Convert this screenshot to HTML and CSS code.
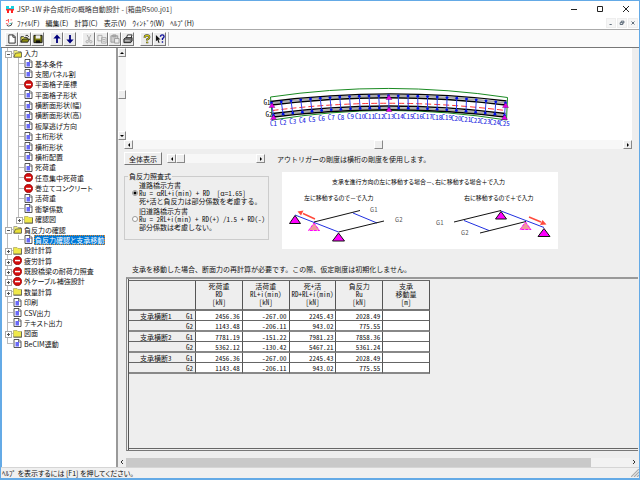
FILE: index.html
```html
<!DOCTYPE html>
<html>
<head>
<meta charset="utf-8">
<title>JSP-1W 非合成桁の概略自動設計</title>
<link rel="stylesheet" href="styles.css">
</head>
<body>
<svg width="0" height="0" class="defs" aria-hidden="true">
  <symbol id="doc" viewBox="0 0 8 9"><path d="M.5.5h5l2 2v6h-7z" fill="#fff" stroke="#444" stroke-width=".9"/><path d="M5 .5v2.500h2.500" fill="none" stroke="#444" stroke-width=".7"/><path d="M2 3h3.500v4.500H2z" fill="#6a6af8"/></symbol>
  <symbol id="stop" viewBox="0 0 9 9"><circle cx="4.500" cy="4.500" r="4.200" fill="#d40c0c" stroke="#700" stroke-width=".6"/><path d="M2 3.800h5v1.500H2z" fill="#fff"/></symbol>
  <symbol id="folder" viewBox="0 0 9 9"><path d="M.5 1.500h3.500l1 1h3.500v5.500h-8z" fill="#efe84a" stroke="#a8a464" stroke-width=".7"/><path d="M.5 8.200h8.200V2.700" fill="none" stroke="#444" stroke-width=".8"/></symbol>
  <symbol id="folder-open" viewBox="0 0 9 9"><path d="M.8 8V1.500h3.200l1 1h3V8z" fill="#f4f07a" stroke="#888" stroke-width=".7"/><path d="M2.500 4.200L8.500 3.500V8.200H.8z" fill="#e8e038" stroke="#444" stroke-width=".7"/></symbol>
  <symbol id="tri-l" viewBox="0 0 6 6"><path d="M4 1v4L2 3z"/></symbol>
  <symbol id="tri-r" viewBox="0 0 6 6"><path d="M2 1v4l2-2z"/></symbol>
  <symbol id="tri-u" viewBox="0 0 6 6"><path d="M1 4h4L3 2z"/></symbol>
  <symbol id="tri-d" viewBox="0 0 6 6"><path d="M1 2h4L3 4z"/></symbol>
</svg>
<div class="window">
  <header class="titlebar">
    <svg class="app-icon" viewBox="0 0 8 8"><path d="M0 1h3v2h2V1h3v3H0z" fill="#18d0dc"/><path d="M0 4h8v1.500H0z" fill="#e33"/><path d="M1 5h2v3H1zM5 5h2v3H5z" fill="#f22"/></svg>
    <h1 class="title">JSP-1W 非合成桁の概略自動設計 - [箱曲R500.j01]</h1>
    <div class="window-controls">
      <button aria-label="最小化"><svg viewBox="0 0 8 8"><path d="M1 4.500h6"/></svg></button>
      <button aria-label="最大化"><svg viewBox="0 0 8 8"><path d="M1.500 1.500h5v5h-5z"/></svg></button>
      <button aria-label="閉じる"><svg viewBox="0 0 8 8"><path d="M1 1l6 6M7 1L1 7"/></svg></button>
    </div>
  </header>
  <nav class="menubar">
    <svg class="app-icon" viewBox="0 0 9 9"><path d="M1 2l3-1M4 0v4M1 5l3 1M6 1h2" stroke="#f44" fill="none"/><path d="M2 7l2 1 3-1 1-3" stroke="#333" fill="none"/><path d="M5 5h2" stroke="#2cc"/></svg>
    <button>ﾌｧｲﾙ(F)</button><button>編集(E)</button><button>計算(C)</button><button>表示(V)</button><button>ｳｨﾝﾄﾞｳ(W)</button><button>ﾍﾙﾌﾟ(H)</button>
    <div class="mdi-controls">
      <button aria-label="子ウィンドウを最小化"><svg viewBox="0 0 8 8"><path d="M2 6h3"/></svg></button>
      <button aria-label="元に戻す"><svg viewBox="0 0 8 8"><path d="M3 3V1.500h3.500V4H5M1.500 3.500H5V6H1.500z"/></svg></button>
      <button aria-label="子ウィンドウを閉じる"><svg viewBox="0 0 8 8"><path d="M2 2l4 4M6 2L2 6"/></svg></button>
    </div>
  </nav>
  <div class="toolbar">
    <div class="tool-group">
      <button aria-label="新規"><svg viewBox="0 0 11 11"><path d="M2 1h5l2 2v7H2z" fill="#fff" stroke="#222"/><path d="M6.500 1v2.500H9" fill="none" stroke="#222"/></svg></button>
      <button aria-label="開く"><svg viewBox="0 0 11 11"><path d="M1 9V3h3l1 1h3v2" fill="#f3f060" stroke="#222"/><path d="M1 9l2-3.500h7.500L8.500 9z" fill="#8a8a10" stroke="#222"/><path d="M6 2q2-2 3.500 1" fill="none" stroke="#222"/></svg></button>
      <button aria-label="保存"><svg viewBox="0 0 11 11"><path d="M1 1.500h9v8H1z" fill="#77770c" stroke="#111"/><path d="M3 1.500h5V5H3z" fill="#eee"/><path d="M3 7h5v3H3z" fill="#111"/></svg></button>
    </div>
    <div class="tool-group">
      <button aria-label="上へ"><svg viewBox="0 0 11 11"><path d="M5.500.5L9.500 5h-3v5h-2V5h-3z" fill="#00007c"/></svg></button>
      <button aria-label="下へ"><svg viewBox="0 0 11 11"><path d="M5.500 10.500L1.500 6h3V1h2v5h3z" fill="#00007c"/></svg></button>
    </div>
    <div class="tool-group">
      <button aria-label="切り取り"><svg viewBox="0 0 11 11" fill="none" stroke="#aaa"><path d="M3.500 1l3 6.500M7.500 1l-3 6.500"/><circle cx="3.500" cy="8.500" r="1.300"/><circle cx="7.500" cy="8.500" r="1.300"/></svg></button>
      <button aria-label="コピー"><svg viewBox="0 0 11 11" fill="#eee" stroke="#aaa"><path d="M1 1.500h4.500v6H1zM5 4h5v6H5zM6 6h3M6 8h3"/></svg></button>
      <button aria-label="貼り付け"><svg viewBox="0 0 11 11" fill="#ccc" stroke="#999"><path d="M1 2h7.500v7H1zM3 1h3.500v2H3z"/><path d="M5 5h5v5H5z" fill="#eee"/></svg></button>
      <button aria-label="印刷"><svg viewBox="0 0 11 11"><path d="M3.500 5L5 1h5L8.500 5" fill="#fff" stroke="#222"/><path d="M1 5.500L3 4h7v3.500L8.500 9.500H1z" fill="#777" stroke="#222"/><path d="M2 7.500h5.500" stroke="#ddd"/></svg></button>
    </div>
    <div class="tool-group">
      <button aria-label="バージョン情報"><svg viewBox="0 0 11 11"><path d="M3 4q0-2.500 2.500-2.500T8 3.500Q8 5 5.700 6v1.200M5.700 8.500v1.700" fill="none" stroke="#333" stroke-width="2.400"/><path d="M3 4q0-2.500 2.500-2.500T8 3.500Q8 5 5.700 6v1.200M5.700 8.500v1.500" fill="none" stroke="#cfc810" stroke-width="1.300"/></svg></button>
      <button aria-label="ヘルプ"><svg viewBox="0 0 11 11"><path d="M1 1v7l1.700-1.500L4 10l1-.5L3.800 6H6z" fill="#111"/><path d="M6 3q0-2 2-2t2 1.800Q10 4 8.200 5v1.500M8.200 8v1.500" fill="none" stroke="#10109a" stroke-width="1.500"/></svg></button>
    </div>
    <span class="tool-end"></span>
  </div>

  <main class="workspace">
    <aside class="sidebar">
      <ul class="tree">
        <li class="root open"><a href="#"><svg><use href="#folder-open"/></svg><span>入力</span></a></li>
        <li class="child"><a href="#"><svg><use href="#doc"/></svg><span>基本条件</span></a></li>
        <li class="child"><a href="#"><svg><use href="#doc"/></svg><span>支間パネル割</span></a></li>
        <li class="child"><a href="#"><svg><use href="#stop"/></svg><span>平面格子座標</span></a></li>
        <li class="child"><a href="#"><svg><use href="#doc"/></svg><span>平面格子形状</span></a></li>
        <li class="child"><a href="#"><svg><use href="#doc"/></svg><span>横断面形状(幅)</span></a></li>
        <li class="child"><a href="#"><svg><use href="#doc"/></svg><span>横断面形状(高)</span></a></li>
        <li class="child"><a href="#"><svg><use href="#doc"/></svg><span>板厚逃げ方向</span></a></li>
        <li class="child"><a href="#"><svg><use href="#doc"/></svg><span>主桁形状</span></a></li>
        <li class="child"><a href="#"><svg><use href="#doc"/></svg><span>横桁形状</span></a></li>
        <li class="child"><a href="#"><svg><use href="#doc"/></svg><span>横桁配置</span></a></li>
        <li class="child"><a href="#"><svg><use href="#doc"/></svg><span>死荷重</span></a></li>
        <li class="child"><a href="#"><svg><use href="#stop"/></svg><span>任意集中死荷重</span></a></li>
        <li class="child"><a href="#"><svg><use href="#stop"/></svg><span>巻立てコンクリート</span></a></li>
        <li class="child"><a href="#"><svg><use href="#doc"/></svg><span>活荷重</span></a></li>
        <li class="child"><a href="#"><svg><use href="#doc"/></svg><span>衝撃係数</span></a></li>
        <li class="child last closed"><a href="#"><svg><use href="#folder"/></svg><span>確認図</span></a></li>
        <li class="root open"><a href="#"><svg><use href="#folder-open"/></svg><span>負反力の確認</span></a></li>
        <li class="child last"><a href="#" class="selected"><svg><use href="#doc"/></svg><span>負反力確認と支承移動</span></a></li>
        <li class="root closed"><a href="#"><svg><use href="#folder"/></svg><span>設計計算</span></a></li>
        <li class="root closed"><a href="#"><svg><use href="#stop"/></svg><span>疲労計算</span></a></li>
        <li class="root closed"><a href="#"><svg><use href="#stop"/></svg><span>既設橋梁の耐荷力照査</span></a></li>
        <li class="root closed"><a href="#"><svg><use href="#stop"/></svg><span>外ケーブル補強設計</span></a></li>
        <li class="root closed"><a href="#"><svg><use href="#folder"/></svg><span>数量計算</span></a></li>
        <li class="root"><a href="#"><svg><use href="#doc"/></svg><span>印刷</span></a></li>
        <li class="root"><a href="#"><svg><use href="#doc"/></svg><span>CSV出力</span></a></li>
        <li class="root"><a href="#"><svg><use href="#doc"/></svg><span>テキスト出力</span></a></li>
        <li class="root closed"><a href="#"><svg><use href="#folder"/></svg><span>図面</span></a></li>
        <li class="root end"><a href="#"><svg><use href="#doc"/></svg><span>BeCIM連動</span></a></li>
      </ul>
    </aside>

    <section class="content">
      <div class="view">
        <div class="scroll vertical">
          <button aria-label="上"><svg><use href="#tri-u"/></svg></button><i></i><button aria-label="縦位置"></button><i></i><button aria-label="下"><svg><use href="#tri-d"/></svg></button>
        </div>
        <svg class="bridge" viewBox="126 48 505 92">
          <g fill="none">
            <path d="M270 97Q388 79.600 507 97.500L506 120Q388 101 272 120z" stroke="#1a8a22"/>
            <path d="M270 103.200Q388 88.500 506 103M272 115.300Q388 100.500 504 115.300" stroke="#aaa" stroke-width="2"/>
            <path d="M270 101.500Q388 86.500 506 101M271 105Q388 90.500 505 105M272 113.500Q388 98.500 505 113.500M273 117Q388 102.500 504 117" stroke="#000" stroke-width="1.300"/>
            <path d="M272 110.500Q388 96 505 110.500" stroke="#f33" stroke-dasharray="6 3"/>
          </g>
          <g id="frames"></g>
          <g fill="#e800e8" stroke="#700070" stroke-width=".4"><path d="M271.500 103l3 4.500h-6zM273 115l3 4.500h-6zM388.500 95l3 4.500h-6zM388.500 107l3 4.500h-6zM505 103l3 4.500h-6zM504 115l3 4.500h-6z"/></g>
          <text x="270" y="105">G1</text><text x="272" y="117">G2</text>
        </svg>
      </div>
      <div class="scroll wide">
        <button aria-label="左"><svg><use href="#tri-l"/></svg></button><i></i><button aria-label="横位置"></button><i></i><button aria-label="右"><svg><use href="#tri-r"/></svg></button>
      </div>

      <div class="actions">
        <button class="raised">全体表示</button>
        <div class="scroll small">
          <button aria-label="縮小"><svg><use href="#tri-l"/></svg></button><button aria-label="倍率"></button><i></i><button aria-label="拡大"><svg><use href="#tri-r"/></svg></button>
        </div>
        <p class="notice">アウトリガーの剛度は横桁の剛度を使用します。</p>
      </div>

      <div class="settings">
        <fieldset class="formula">
          <legend>負反力照査式</legend>
          <label><input type="radio" name="formula" checked><span>道路橋示方書<br>Ru = αRL+i(min) + RD&nbsp; [α=1.65]<br>死+活と負反力は部分係数を考慮する。</span></label>
          <label><input type="radio" name="formula"><span>旧道路橋示方書<br>Ru = 2RL+i(min) + RD(+) /1.5 + RD(-)<br>部分係数は考慮しない。</span></label>
        </fieldset>
        <svg class="guide" viewBox="282 172 276 77">
          <text x="332" y="184">支承を進行方向の左に移動する場合－、右に移動する場合＋で入力</text>
          <text x="304" y="200">左に移動するので－で入力</text>
          <text x="464" y="200">右に移動するので＋で入力</text>
          <g fill="none">
            <path d="M295 215l43.500 17M353 213l24 10M501 211l43 16.500M464 220.500l25 10" stroke="#2030e0"/>
            <path d="M314 222l46-11.500M338.500 232l45.500-11M454 222l47-11.500M480 233l46-11.500" stroke="#111"/>
            <path d="M315 219l-12-5.500M529 217l12 5" stroke="#ff4a3c" stroke-width="1.500"/>
          </g>
          <path d="M297.500 211.500l6-1-2.500 5zM546.500 224.500l-6.500.5 2.500-5z" fill="#ff4a3c"/>
          <g fill="#f0f" stroke="#111"><path d="M295 215.500l5.500 8h-11zM338.500 233l6 8h-12zM501 211.500l5.500 7.500h-11zM544 228.500l6 8h-12z"/></g>
          <g fill="#ef9a9a" stroke="#f0f" stroke-dasharray="3 1"><path d="M314 223l5.500 7.500h-11zM525.500 222l5.500 7.500h-11z"/></g>
          <g class="girder"><text x="370" y="212">G1</text><text x="395" y="222">G2</text><text x="436" y="225">G1</text><text x="461" y="235">G2</text></g>
        </svg>
      </div>

      <p class="remark">支承を移動した場合、断面力の再計算が必要です。この際、仮定剛度は初期化しません。</p>

      <div class="sheet">
        <table>
          <colgroup><col class="name"><col><col><col><col><col></colgroup>
          <thead><tr><th></th><th>死荷重<br>RD<br>[kN]</th><th>活荷重<br>RL+i(min)<br>[kN]</th><th>死＋活<br>RD+RL+i(min)<br>[kN]</th><th>負反力<br>Ru<br>[kN]</th><th>支承<br>移動量<br>[m]</th></tr></thead>
          <tbody>
            <tr><th><div><span>支承横断1</span><span>G1</span></div></th><td>2456.36</td><td>-267.00</td><td>2245.43</td><td>2028.49</td><td></td></tr>
            <tr><th><div><span></span><span>G2</span></div></th><td>1143.48</td><td>-206.11</td><td>943.02</td><td>775.55</td><td></td></tr>
            <tr><th><div><span>支承横断2</span><span>G1</span></div></th><td>7781.19</td><td>-151.22</td><td>7981.23</td><td>7858.36</td><td></td></tr>
            <tr><th><div><span></span><span>G2</span></div></th><td>5362.12</td><td>-130.42</td><td>5467.21</td><td>5361.24</td><td></td></tr>
            <tr><th><div><span>支承横断3</span><span>G1</span></div></th><td>2456.36</td><td>-267.00</td><td>2245.43</td><td>2028.49</td><td></td></tr>
            <tr><th><div><span></span><span>G2</span></div></th><td>1143.48</td><td>-206.11</td><td>943.02</td><td>775.55</td><td></td></tr>
          </tbody>
        </table>
      </div>

      <div class="page-scroll">
        <button aria-label="左へ"><svg viewBox="0 0 6 8"><path d="M4 2L2 4l2 2"/></svg></button>
        <span class="track"><span class="thumb"></span></span>
        <button aria-label="右へ"><svg viewBox="0 0 6 8"><path d="M2 2l2 2-2 2"/></svg></button>
      </div>
    </section>
  </main>

  <footer class="statusbar">
    <span>ﾍﾙﾌﾟ を表示するには [F1] を押してください。</span>
    <svg class="grip" viewBox="0 0 8 8"><path d="M0 8l8-8M3 8l5-5M6 8l2-2" stroke="#aaa" stroke-width="1.200"/></svg>
  </footer>
</div>
<script src="bridge.js"></script>
</body>
</html>
```

FILE: styles.css
```css
* { box-sizing: border-box; }
body {
  margin: 0;
  font: 7px/10px "Noto Sans CJK JP", sans-serif;
  color: #111;
}
button {
  margin: 0;
  padding: 0;
  border: 0;
  background: none;
  font: inherit;
  color: inherit;
}
h1, p, ul { margin: 0; padding: 0; font: inherit; }
a { color: inherit; text-decoration: none; }
svg { display: block; }
.defs { position: absolute; }

.window {
  display: flex;
  flex-direction: column;
  min-height: 100vh;
  border: 1px solid #64aae6;
  border-bottom-width: 2px;
  background: #eee;
  font-feature-settings: "palt";
}
.titlebar {
  display: flex;
  align-items: center;
  height: 16px;
  padding-left: 5px;
  gap: 3px;
  background: #fff;
}
.app-icon { width: 8px; height: 8px; }
.titlebar .title { flex: 1; color: #333; }
.window-controls { display: flex; gap: 18px; padding-right: 9px; }
.window-controls svg { width: 8px; height: 8px; fill: none; stroke: #222; }

.menubar {
  display: flex;
  align-items: center;
  height: 13px;
  padding-left: 4px;
  gap: 6px;
  background: #fff;
  border-bottom: 1px solid #aaa;
}
.menubar .app-icon { margin-right: -2px; }
.mdi-controls { display: flex; gap: 1px; margin-left: auto; padding-right: 1px; }
.mdi-controls button { padding: 1px; background: #f6f6f6; border: 1px solid #eee; }
.mdi-controls svg { width: 6px; height: 6px; fill: none; stroke: #345; }

.toolbar {
  display: flex;
  align-items: center;
  height: 18px;
  padding-left: 4px;
  gap: 6px;
  background: #fafafa;
  border-bottom: 1px solid #777;
}
.tool-group { display: flex; }
.tool-group button {
  width: 13px;
  height: 14px;
  padding: 1px 0 0 1px;
  background: #ececec;
  border: 1px solid;
  border-color: #fff #777 #777 #fff;
}
.tool-group svg { width: 10px; height: 10px; }
.tool-end { width: 1px; height: 14px; margin-left: -4px; background: #bbb; }

.workspace { display: flex; flex: 1; }
.sidebar {
  width: 117px;
  padding-left: 2px;
  background: #fff;
  border-left: 1px solid #64aae6;
  border-right: 2px solid #999;
}
.tree {
  display: flex;
  flex-direction: column;
  height: 301px;
  list-style: none;
}
.tree li { position: relative; flex: 1; display: flex; align-items: center; padding-left: 9px; }
.tree .child { padding-left: 20px; }
.tree a { display: flex; align-items: center; gap: 1px; white-space: nowrap; }
.tree svg { width: 9px; height: 9px; }
.tree a span { padding: 0 1px; line-height: 10px; }
.tree .selected span { color: #fff; background: #0078d7; outline: 1px dotted #e0892c; outline-offset: -1px; }
.tree li { background: linear-gradient(#bbb, #bbb) 3px 0 / 1px 100% no-repeat, linear-gradient(#bbb, #bbb) 3px 50% / 6px 1px no-repeat; }
.tree .child { background: linear-gradient(#bbb, #bbb) 3px 0 / 1px 100% no-repeat, linear-gradient(#bbb, #bbb) 14px 0 / 1px 100% no-repeat, linear-gradient(#bbb, #bbb) 14px 50% / 6px 1px no-repeat; }
.tree .child.last { background-size: 1px 100%, 1px 50%, 6px 1px; }
.tree .end { background-size: 1px 50%, 6px 1px; }
.tree .open::before, .tree .closed::before {
  content: "";
  position: absolute;
  left: 1px;
  top: 3px;
  width: 5px;
  height: 5px;
  border: 1px solid #aaa;
  background: linear-gradient(#555, #555) 50% / 3px 1px no-repeat #fff;
}
.tree .closed::before {
  background: linear-gradient(#555, #555) 50% / 3px 1px no-repeat, linear-gradient(#555, #555) 50% / 1px 3px no-repeat, #fff;
}
.tree .child.closed::before { left: 12px; }

.content { display: flex; flex-direction: column; flex: 1; min-width: 0; }
.view { display: flex; margin-right: 7px; }
.bridge { flex: 1; min-width: 0; height: 92px; background: #fff; }
.bridge text { font-size: 7px; font-feature-settings: "hwid"; text-anchor: end; }
.bridge .mark { fill: #1020e0; font-size: 7px; text-anchor: middle; }

.scroll { display: flex; background: #f7f7f7; }
.scroll i { flex: 1; }
.scroll button {
  display: flex;
  align-items: center;
  justify-content: center;
  width: 9px;
  height: 9px;
  background: #eee;
  border: 1px solid;
  border-color: #fff #888 #888 #fff;
}
.scroll svg { width: 6px; height: 6px; }
.scroll.vertical { flex-direction: column; width: 8px; }
.scroll.vertical button { width: 8px; }
.scroll.wide { margin: 0 7px 0 6px; }
.scroll.small { width: 98px; }

.actions { display: flex; align-items: center; padding: 3px 6px; gap: 5px; }
.raised {
  width: 38px;
  height: 13px;
  background: #eee;
  border: 1px solid;
  border-color: #fff #777 #777 #fff;
}
.notice { padding-left: 7px; font-feature-settings: normal; }

.settings { display: flex; padding-left: 6px; gap: 13px; margin-top: 4px; }
.formula {
  flex: none;
  width: 145px;
  min-width: 0;
  height: 68px;
  margin: 0;
  padding: 0 4px 0 7px;
  border: 1px solid #ccc;
  font-feature-settings: "hwid";
  line-height: 8px;
}
.formula legend { margin-left: -4px; padding: 0 1px; line-height: 9px; }
.formula label { display: flex; align-items: center; gap: 1px; margin-bottom: 2px; white-space: nowrap; }
.formula input {
  appearance: none;
  flex: none;
  width: 6px;
  height: 6px;
  margin: 0;
  border: 1px solid #999;
  border-radius: 50%;
  background: #fff;
}
.formula input:checked { background: radial-gradient(#000 0 1px, #fff 2px); }
.guide { width: 276px; height: 77px; background: #fff; }
.guide text { font-size: 6px; }
.guide .girder { fill: #555; }

.remark { padding: 15px 0 0 14px; font-feature-settings: normal; }

.sheet {
  flex: 1;
  margin: 3px 1px 6px 8px;
  padding: 1px 0 0 1px;
  border: 1px solid #777;
  border-width: 2px 0 1px 1px;
  border-top-color: #999;
  border-left-color: #888;
  background: #eee;
  box-shadow: inset 1px 0 #eee, inset 2px 0 #555, inset 0 -1px #eee, inset 0 -2px #666;
}
table {
  width: 302px;
  table-layout: fixed;
  border-collapse: separate;
  border-spacing: 0;
  border-left: 1px solid #555;
  border-top: 1px solid #666;
  font-feature-settings: "hwid";
  line-height: 8px;
}
.name { width: 67px; }
th, td {
  height: 10px;
  padding: 0 2px;
  border-right: 1px solid #555;
  border-bottom: 1px solid #666;
  font-weight: normal;
  white-space: nowrap;
}
thead th { height: 30px; padding: 0 0 2px; border-bottom: 2px solid #777; }
td { background: #fff; text-align: right; }
tbody tr:nth-child(even) > * { height: 11px; border-bottom: 2px solid #888; }
tbody th div { display: flex; justify-content: space-between; padding-left: 9px; }

.page-scroll { display: flex; align-items: center; height: 10px; padding: 0 1px; }
.page-scroll svg { width: 6px; height: 8px; fill: none; stroke: #333; }
.page-scroll button { width: 7px; }
.track { flex: 1; background: #f2f2f2; }
.thumb { display: block; width: 92%; height: 9px; background: #c9c9c9; }

.statusbar {
  display: flex;
  align-items: center;
  justify-content: space-between;
  height: 11px;
  padding-left: 1px;
  background: #f0f0f0;
  border-top: 1px solid #d5d5d5;
}
.grip { width: 8px; height: 8px; }
```

FILE: bridge.js
```js
// Cross frames C1 to C25 along the curved girders.
var group = document.getElementById("frames");
var ns = "http://www.w3.org/2000/svg";
function add(name, attrs) {
  var el = document.createElementNS(ns, name);
  Object.keys(attrs).forEach(function (key) { el.setAttribute(key, attrs[key]); });
  group.appendChild(el);
  return el;
}
for (var i = 0; i < 25; i++) {
  var t = i / 24;
  var rise = 29 * t * (1 - t);
  var x1 = 271 + 234 * t, y1 = 103 - rise;
  var x2 = 273 + 231 * t, y2 = 115.3 - rise;
  add("path", { d: "M" + x1 + " " + y1 + "L" + x2 + " " + y2, stroke: "#3040f0", "stroke-width": 1 });
  add("circle", { cx: x1, cy: y1, r: 1.4, fill: "#0010e8" });
  add("circle", { cx: x2, cy: y2, r: 1.4, fill: "#0010e8" });
  add("text", { x: x2, y: y2 + 10.5, "class": "mark" }).textContent = "C" + (i + 1);
}
```
